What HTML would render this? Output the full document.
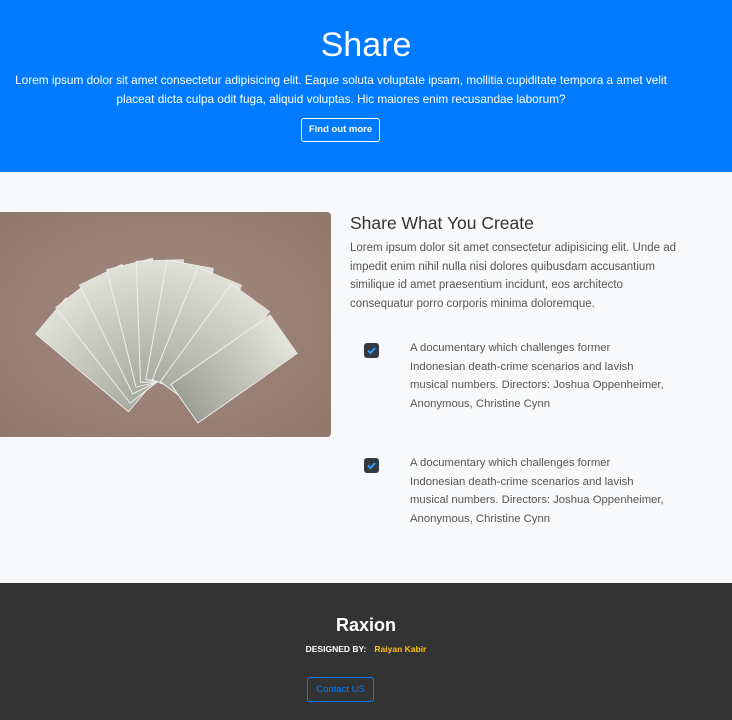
<!DOCTYPE html>
<html><head><style>
body{margin:0;width:732px;height:720px;overflow:hidden;font-family:"Liberation Sans",sans-serif;background:#f8f9fa}
.hero{background:#007bff;height:172px;color:#fff;text-align:center;position:relative}
.hero h1{margin:0;position:absolute;top:26px;width:100%;font-weight:300;font-size:34px}
.hero p{position:absolute;top:71px;left:0;width:682px;margin:0;font-size:11.8px;line-height:19px;font-weight:300}
.btn1{position:absolute;left:301px;top:118px;width:77px;height:22px;border:1px solid #fff;border-radius:3px;font-size:9.5px;line-height:22px;font-weight:bold}
.img{position:absolute;left:0;top:212px;width:331px;height:225px;background:radial-gradient(ellipse at 50% 50%,#a58c80,#8f776c);border-radius:0 4px 4px 0;overflow:hidden}
.bill{position:absolute;width:46px;height:120px;background:linear-gradient(#dfe0d8,#a9aca3);border:1px solid #eee;transform-origin:50% 100%}
h2{position:absolute;left:350px;top:213px;margin:0;font-size:17.5px;font-weight:500;color:#333}
.intro{position:absolute;left:350px;top:239px;width:360px;margin:0;font-size:11.5px;line-height:18.5px;color:#555;font-weight:300;white-space:nowrap}
.item{position:absolute;left:410px;width:300px;font-size:11.3px;line-height:18.5px;color:#555;font-weight:300;white-space:nowrap}
.chk{position:absolute;left:364px;width:15px;height:15px;background:#343a40;border-radius:3px}
.foot{position:absolute;top:583px;left:0;width:732px;height:137px;background:#333;text-align:center;color:#fff}
</style></head><body>
<div class="hero"><h1>Share</h1>
<p>Lorem ipsum dolor sit amet consectetur adipisicing elit. Eaque soluta voluptate ipsam, mollitia cupiditate tempora a amet velit<br>placeat dicta culpa odit fuga, aliquid voluptas. Hic maiores enim recusandae laborum?</p>
<div class="btn1">Find out more</div></div>
<div class="img">
<div class="bill" style="left:120px;top:60px;transform:rotate(-50deg)"></div>
<div class="bill" style="left:125px;top:55px;transform:rotate(-38deg)"></div>
<div class="bill" style="left:130px;top:50px;transform:rotate(-26deg)"></div>
<div class="bill" style="left:135px;top:48px;transform:rotate(-14deg)"></div>
<div class="bill" style="left:140px;top:48px;transform:rotate(-2deg)"></div>
<div class="bill" style="left:145px;top:50px;transform:rotate(10deg)"></div>
<div class="bill" style="left:150px;top:55px;transform:rotate(22deg)"></div>
<div class="bill" style="left:155px;top:62px;transform:rotate(36deg)"></div>
<div class="bill" style="left:160px;top:70px;transform:rotate(55deg);background:linear-gradient(#e3e4dc,#9da095)"></div>
</div>
<h2>Share What You Create</h2>
<p class="intro">Lorem ipsum dolor sit amet consectetur adipisicing elit. Unde ad<br>impedit enim nihil nulla nisi dolores quibusdam accusantium<br>similique id amet praesentium incidunt, eos architecto<br>consequatur porro corporis minima doloremque.</p>
<div class="chk" style="top:343px"><svg width="15" height="15"><path d="M4 7.5l2.5 2.5 4.5-5" stroke="#2b9bff" stroke-width="2" fill="none"/></svg></div>
<div class="item" style="top:339px">A documentary which challenges former<br>Indonesian death-crime scenarios and lavish<br>musical numbers. Directors: Joshua Oppenheimer,<br>Anonymous, Christine Cynn</div>
<div class="chk" style="top:458px"><svg width="15" height="15"><path d="M4 7.5l2.5 2.5 4.5-5" stroke="#2b9bff" stroke-width="2" fill="none"/></svg></div>
<div class="item" style="top:454px">A documentary which challenges former<br>Indonesian death-crime scenarios and lavish<br>musical numbers. Directors: Joshua Oppenheimer,<br>Anonymous, Christine Cynn</div>
<div class="foot">
<div style="position:absolute;top:32px;width:100%;font-size:18px;font-weight:bold">Raxion</div>
<div style="position:absolute;top:61px;width:100%;font-size:8.5px;font-weight:bold"><span style="margin-right:8px">DESIGNED BY:</span><span style="color:#ffc107">Raiyan Kabir</span></div>
<div style="position:absolute;left:307px;top:94px;width:65px;height:23px;border:1px solid #007bff;border-radius:3px;color:#007bff;font-size:9.5px;line-height:23px">Contact US</div>
</div>
</body></html>
